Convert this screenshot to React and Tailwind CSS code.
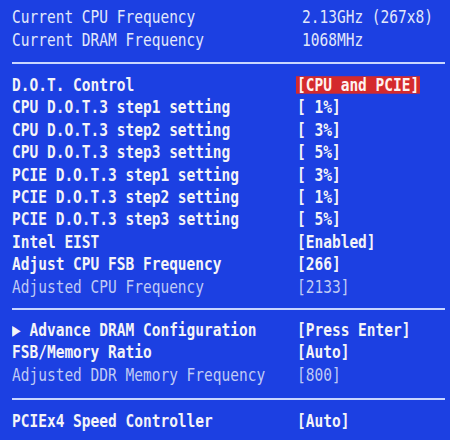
import React from 'react';

const info = [
  ['Current CPU Frequency', '2.13GHz (267x8)'],
  ['Current DRAM Frequency', '1068MHz'],
];

const dot = [
  ['D.O.T. Control', '[CPU and PCIE]', 'hl'],
  ['CPU D.O.T.3 step1 setting', '[ 1%]'],
  ['CPU D.O.T.3 step2 setting', '[ 3%]'],
  ['CPU D.O.T.3 step3 setting', '[ 5%]'],
  ['PCIE D.O.T.3 step1 setting', '[ 3%]'],
  ['PCIE D.O.T.3 step2 setting', '[ 1%]'],
  ['PCIE D.O.T.3 step3 setting', '[ 5%]'],
  ['Intel EIST', '[Enabled]'],
  ['Adjust CPU FSB Frequency', '[266]'],
  ['Adjusted CPU Frequency', '[2133]', 'dim'],
];

const dram = [
  ['\u25B6 Advance DRAM Configuration', '[Press Enter]'],
  ['FSB/Memory Ratio', '[Auto]'],
  ['Adjusted DDR Memory Frequency', '[800]', 'dim'],
];

const Row = ({ label, value, kind }) => (
  <div className="flex items-center h-[22.4px] scale-y-[1.25]">
    <span className={`w-[285px] shrink-0 whitespace-pre ${kind === 'dim' ? 'text-[#c0cbf5] font-normal' : 'text-[#f4f4f8] font-bold'}`}>
      {label}
    </span>
    <span
      className={`whitespace-pre ${
        kind === 'hl'
          ? 'bg-[#d42a2c] text-[#fff2f0] font-bold px-[1px] -ml-[1px]'
          : kind === 'dim'
          ? 'text-[#c0cbf5] font-normal'
          : 'text-[#f4f4f8] font-bold'
      }`}
    >
      {value}
    </span>
  </div>
);

const Divider = ({ mt }) => <div className={`${mt} h-[2px] w-[433px] bg-[#c9d6ff]`} />;

export default function App() {
  return (
    <div
      className="w-[450px] h-[440px] overflow-hidden bg-[#1c40e2] pl-[12px] pt-[6px] text-[14.5px] leading-none"
      style={{ fontFamily: '"DejaVu Sans Mono", "Liberation Mono", monospace' }}
    >
      {info.map(([l, v]) => (
        <div key={l} className="flex items-center h-[23px] scale-y-[1.25]">
          <span className="w-[290px] shrink-0 text-[#e2e8fb]">{l}</span>
          <span className="text-[#e2e8fb] whitespace-pre">{v}</span>
        </div>
      ))}
      <Divider mt="mt-[10px]" />
      <div className="mt-[10px]">
        {dot.map(([l, v, k]) => (
          <Row key={l} label={l} value={v} kind={k} />
        ))}
      </div>
      <Divider mt="mt-[10px]" />
      <div className="mt-[9px]">
        {dram.map(([l, v, k]) => (
          <Row key={l} label={l} value={v} kind={k} />
        ))}
      </div>
      <Divider mt="mt-[12px]" />
      <div className="mt-[10px]">
        <Row label="PCIEx4 Speed Controller" value="[Auto]" />
      </div>
    </div>
  );
}
